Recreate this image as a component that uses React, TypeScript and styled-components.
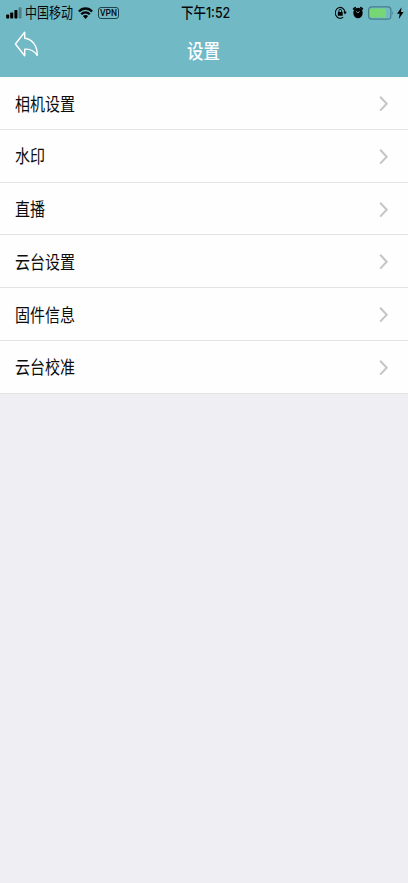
import React from "react";
import styled, { createGlobalStyle } from "styled-components";

const GlobalStyle = createGlobalStyle`
  * { box-sizing: border-box; }
  body { margin: 0; background: #eeeef3; font-family: Inter, "Noto Sans CJK SC", sans-serif; }
`;

const Screen = styled.main`
  min-height: 883px;
  background: #eeeef3;
  overflow: hidden;
`;

const Header = styled.header`
  height: 77.4px;
  background: #72b9c6;
`;

const StatusBar = styled.div`
  display: grid;
  grid-template-columns: 1fr 46px 1fr;
  height: 25px;
  color: #05090a;
`;

const StatusGroup = styled.div<{ $end?: boolean }>`
  display: flex;
  align-items: center;
  justify-content: ${(p) => (p.$end ? "flex-end" : "flex-start")};
  padding: ${(p) => (p.$end ? "0 4px 0 0" : "0 0 0 6px")};
`;

const Carrier = styled.span`
  display: block;
  flex: none;
  width: 47px;
  margin-left: 3px;
`;

const Clock = styled.div`
  display: flex;
  white-space: nowrap;
`;

const Condensed = styled.span<{ $size: number; $scale: number; $weight?: number }>`
  display: block;
  width: max-content;
  font-size: ${(p) => p.$size}px;
  font-weight: ${(p) => p.$weight ?? 400};
  line-height: 25px;
  white-space: nowrap;
  transform: scaleX(${(p) => p.$scale});
  transform-origin: left center;
`;

const VpnBadge = styled.span`
  display: flex;
  align-items: center;
  justify-content: center;
  width: 21px;
  height: 12px;
  margin-left: 5px;
  border: 1px solid #1d434b;
  border-radius: 3px;
  font-family: Roboto, sans-serif;
  font-size: 8.5px;
  line-height: 10px;
  font-weight: 500;
`;

const NavBar = styled.div`
  display: grid;
  grid-template-columns: 1fr 34px 1fr;
  height: 52px;
  color: #fff;
`;

const BackButton = styled.button`
  display: flex;
  align-items: flex-start;
  width: 40px;
  height: 40px;
  padding: 6px 0 0 14px;
  border: 0;
  background: none;
  color: #fff;
`;

const Title = styled.h1`
  margin: 0;
  padding-top: 15px;
`;

const Menu = styled.nav`
  display: grid;
  grid-template-rows: repeat(6, 1fr);
  height: 316.2px;
  background: #fefefe;
`;

const Row = styled.a`
  display: flex;
  align-items: center;
  justify-content: space-between;
  padding: 2px 19px 0 15px;
  border-bottom: 1px solid #e3e3e5;
  color: #0c0c0c;
`;

const Icon = styled.svg<{ $gap?: number }>`
  display: block;
  flex: none;
  margin-left: ${(p) => p.$gap ?? 0}px;
`;

const items = ["相机设置", "水印", "直播", "云台设置", "固件信息", "云台校准"];

const Signal = () => (
  <Icon width="16" height="12" viewBox="0 0 16 12">
    <rect x="0.200" y="7.500" width="3" height="4" rx=".7" />
    <rect x="4.200" y="5.500" width="3" height="6" rx=".7" />
    <rect x="8.400" y="3" width="3" height="8.500" rx=".7" />
    <rect x="12.600" y="0.300" width="3" height="11.200" rx=".7" opacity=".3" />
  </Icon>
);

const Wifi = () => (
  <Icon $gap={6} width="15" height="12" viewBox="0 0 15 12">
    <g fill="none" stroke="currentColor" strokeWidth="2.300">
      <path d="M.9 4.500C4.600.5 10.400.5 14.100 4.500" />
      <path d="M3.200 7.300C5.700 4.600 9.300 4.600 11.800 7.300" />
    </g>
    <path d="M4.900 9Q7.500 6.900 10.100 9L7.500 12Z" />
  </Icon>
);

const RotationLock = () => (
  <Icon width="12" height="13" viewBox="0 0 12 13">
    <path d="M8.200 11.100A4.800 5.500 0 1 1 9.900 6.100" fill="none" stroke="currentColor" strokeWidth="1.100" />
    <path d="M8.300 5.800H11.700L10 8.600Z" />
    <rect x="2.800" y="5.900" width="4.900" height="3.900" rx=".4" />
    <path d="M3.900 6V4.800a1.350 1.500 0 0 1 2.700 0V6" fill="none" stroke="currentColor" strokeWidth="1" />
  </Icon>
);

const Alarm = () => (
  <Icon $gap={5} width="12" height="13" viewBox="0 0 12 13">
    <ellipse cx="6" cy="7" rx="4.700" ry="5.200" />
    <path d="M1.700 3L3.200 1.700M10.300 3L8.800 1.700" stroke="currentColor" strokeWidth="1.800" strokeLinecap="round" />
    <path d="M3.900 5L6 7.100L7.600 5.200" fill="none" stroke="#72b9c6" strokeWidth=".8" />
  </Icon>
);

const Battery = () => (
  <Icon $gap={4} width="26" height="14" viewBox="0 0 26 14">
    <rect x=".6" y=".8" width="22.300" height="12.400" rx="3.200" fill="none" stroke="#477e8a" strokeWidth="1.200" />
    <rect x="2" y="2.500" width="16" height="9" rx="1.300" fill="#75d875" />
    <path d="M24 4.800Q25.700 7 24 9.200Z" fill="#477e8a" />
  </Icon>
);

const Bolt = () => (
  <Icon $gap={3} width="7" height="12" viewBox="0 0 7 12">
    <path d="M4.600.2L0 6.800H2.700L1.800 12L6.600 5H3.900Z" />
  </Icon>
);

const Chevron = () => (
  <Icon width="10" height="18" viewBox="0 0 10 18">
    <path d="M1.200 1.800L7.700 8.700L1.200 15.600" fill="none" stroke="#c4c4c9" strokeWidth="2" />
  </Icon>
);

export default function App() {
  return (
    <Screen>
      <GlobalStyle />
      <Header>
        <StatusBar>
          <StatusGroup>
            <Signal />
            <Carrier>
              <Condensed $size={14.5} $scale={0.828}>中国移动</Condensed>
            </Carrier>
            <Wifi />
            <VpnBadge>VPN</VpnBadge>
          </StatusGroup>
          <Clock>
            <Condensed $size={14.5} $scale={0.86} $weight={500}>下午1:52</Condensed>
          </Clock>
          <StatusGroup $end>
            <RotationLock />
            <Alarm />
            <Battery />
            <Bolt />
          </StatusGroup>
        </StatusBar>
        <NavBar>
          <BackButton aria-label="返回">
            <Icon width="25" height="26" viewBox="0 0 25 26" fill="none" stroke="currentColor" strokeWidth="1.400" strokeLinejoin="round">
              <path d="M1.400 13L10.700 1.200V7.200C18 8 23.500 14.500 23.200 24.400C20 19.600 16.200 17.700 10.700 18.200V24.700Z" />
            </Icon>
          </BackButton>
          <Title>
            <Condensed $size={20} $scale={0.82} $weight={500}>设置</Condensed>
          </Title>
        </NavBar>
      </Header>
      <Menu>
        {items.map((label) => (
          <Row key={label}>
            <Condensed $size={18} $scale={0.833}>{label}</Condensed>
            <Chevron />
          </Row>
        ))}
      </Menu>
    </Screen>
  );
}
